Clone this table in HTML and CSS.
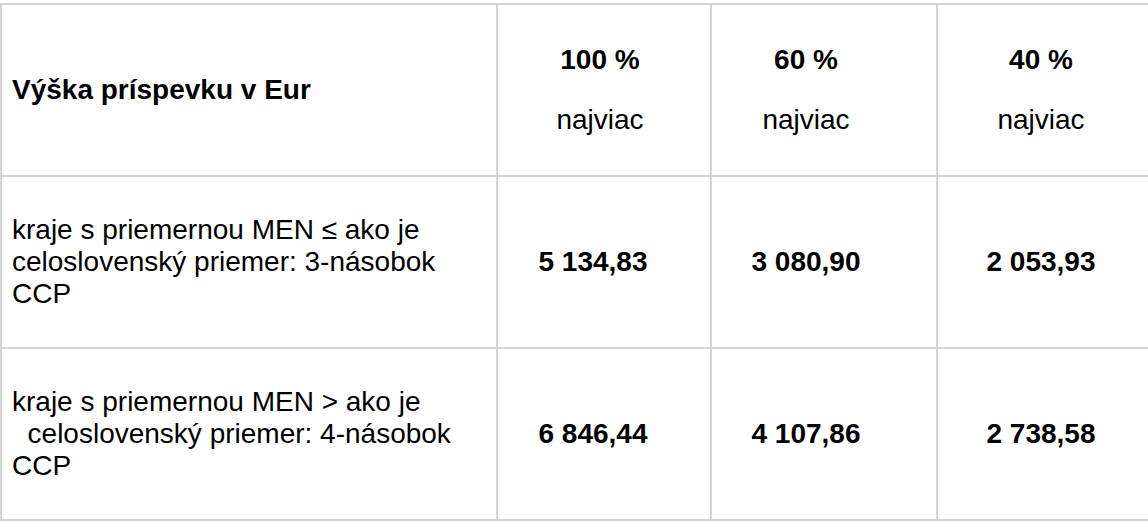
FILE: index.html
```html
<!DOCTYPE html>
<html lang="sk">
<head>
<meta charset="utf-8">
<title>Výška príspevku</title>
<link rel="stylesheet" href="styles.css">
</head>
<body>
<div class="wrap">
<table class="grid">
  <colgroup>
    <col class="c1"><col class="c2"><col class="c3"><col class="c4">
  </colgroup>
  <tr class="head">
    <th class="label">Výška príspevku v Eur</th>
    <th class="pctcell col2"><p class="pct">100 %</p><p class="note">najviac</p></th>
    <th class="pctcell col3"><p class="pct">60 %</p><p class="note">najviac</p></th>
    <th class="pctcell col4"><p class="pct">40 %</p><p class="note">najviac</p></th>
  </tr>
  <tr class="row">
    <td class="label">kraje s priemernou MEN ≤ ako je celoslovenský priemer: 3-násobok CCP</td>
    <td class="num col2">5 134,83</td>
    <td class="num col3">3 080,90</td>
    <td class="num col4">2 053,93</td>
  </tr>
  <tr class="row">
    <td class="label">kraje s priemernou MEN &gt; ako je &nbsp;&nbsp;celoslovenský priemer: 4-násobok CCP</td>
    <td class="num col2">6 846,44</td>
    <td class="num col3">4 107,86</td>
    <td class="num col4">2 738,58</td>
  </tr>
</table>
</div>
</body>
</html>
```

FILE: styles.css
```css
html, body {
  margin: 0;
  padding: 0;
  background: #ffffff;
}

body {
  font-family: "Liberation Sans", Arial, sans-serif;
  color: #000000;
  font-size: 28px;
}

.wrap {
  padding: 3px 0 0 0;
}

.grid {
  border-collapse: collapse;
  table-layout: fixed;
  width: 1150px;
}

.c1 { width: 496px; }
.c2 { width: 214px; }
.c3 { width: 226px; }
.c4 { width: 214px; }

.grid th,
.grid td {
  border: 2px solid #d4d4d4;
  vertical-align: middle;
  padding: 0 10px;
}

.head th,
.row td {
  height: 170px;
}

.grid th.label {
  text-align: left;
  font-weight: 700;
}

.grid td.label {
  text-align: left;
  font-weight: 400;
}

.pctcell {
  text-align: center;
}

.pct {
  margin: 0 0 28px;
  font-weight: 700;
}

.note {
  margin: 0;
  font-weight: 400;
}

.num {
  text-align: center;
  font-weight: 700;
}

.grid .pctcell.col2 { padding: 0 18px 0 10px; }
.grid .num.col2 { padding: 0 32px 0 10px; }
.grid .col3 { padding: 0 36px 0 0; }
.grid .col4 { padding: 0 16px 0 10px; }
```
